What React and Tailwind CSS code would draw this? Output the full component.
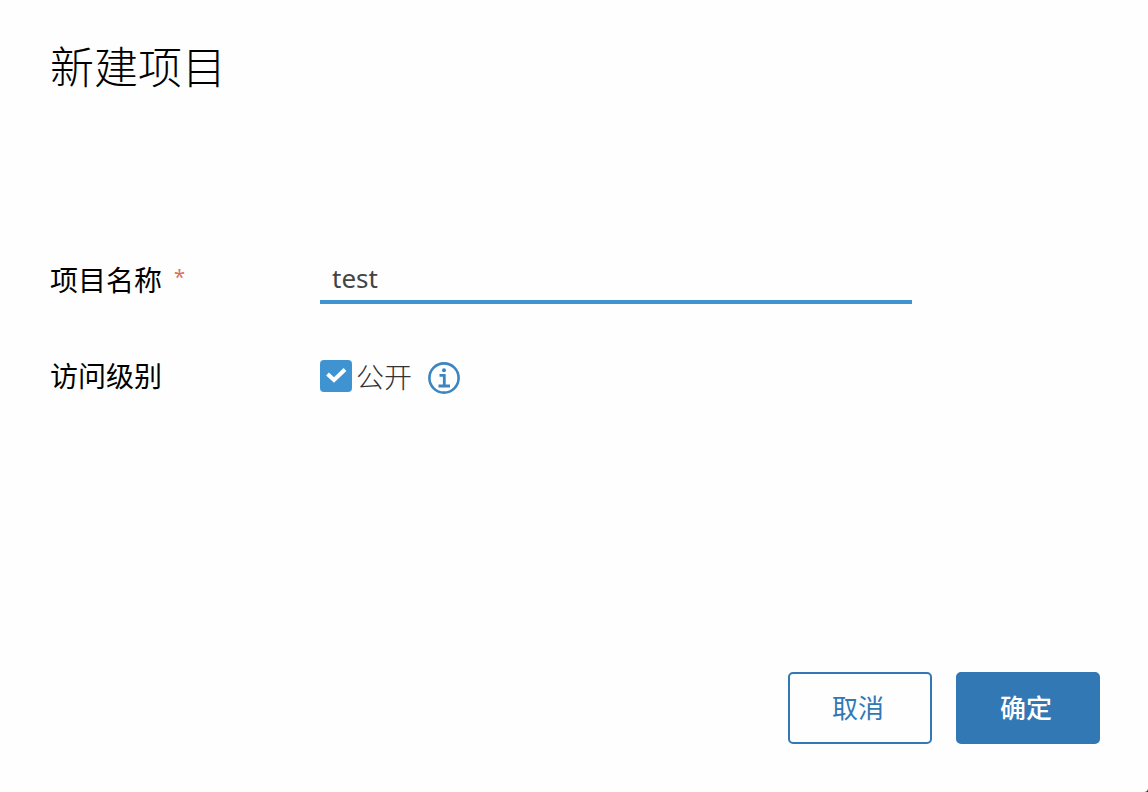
import { useState } from "react";

export default function App() {
  const [name, setName] = useState("test");
  const [isPublic, setIsPublic] = useState(true);

  return (
    <div className="min-h-screen bg-[#313131] font-['Noto_Sans','Noto_Sans_CJK_SC',sans-serif]">
      <form
        className="flex min-h-screen flex-col rounded-br-[4px] bg-[#fefefe] px-12 pt-9 pb-12"
        onSubmit={(e) => e.preventDefault()}
      >
        <h1 className="pl-0.5 text-[44px] leading-[62px] font-light text-black">新建项目</h1>

        <div className="mt-[158px] flex flex-1 flex-col gap-12 pl-0.5">
          <div className="flex items-start">
            <label
              htmlFor="project-name"
              className="flex w-[270px] shrink-0 gap-3 text-[28px] leading-12 text-black"
            >
              项目名称<span className="text-[20px] leading-[42px] text-[#d9705a]">*</span>
            </label>
            <input
              id="project-name"
              type="text"
              value={name}
              onChange={(e) => setName(e.target.value)}
              className="h-12 w-[592px] border-b-4 border-[#3f93d0] bg-transparent px-3 text-[26px] text-[#444444] outline-none"
            />
          </div>

          <div className="flex items-start">
            <span className="w-[270px] shrink-0 text-[28px] leading-12 text-black">访问级别</span>
            <label className="flex items-start gap-1 text-[28px] leading-[50px] font-light text-[#333333]">
              <span className="grid h-12 w-8 items-center">
                <input
                  type="checkbox"
                  checked={isPublic}
                  onChange={(e) => setIsPublic(e.target.checked)}
                  className="peer col-start-1 row-start-1 size-8 appearance-none rounded-[4px] border-2 border-[#3f93d0] checked:bg-[#3f93d0]"
                />
                <svg
                  viewBox="0 0 32 32"
                  className="pointer-events-none invisible col-start-1 row-start-1 size-8 peer-checked:visible"
                  fill="none"
                  stroke="#ffffff"
                  strokeWidth="4"
                  aria-hidden="true"
                >
                  <path d="M7.5 14 L14 20 L25 9.5" />
                </svg>
              </span>
              公开
            </label>
            <button type="button" aria-label="访问级别说明" className="ml-4 flex h-[52px] items-center">
              <svg viewBox="0 0 32 32" className="size-8" fill="none" stroke="#3b86c2" aria-hidden="true">
                <circle cx="16" cy="16" r="14.6" strokeWidth="2.6" />
                <circle cx="16" cy="8.2" r="2" fill="#3b86c2" stroke="none" />
                <path d="M11.5 13.4 H16.3 V24 M10.5 24 H22" strokeWidth="2.8" />
              </svg>
            </button>
          </div>
        </div>

        <div className="flex justify-end gap-6">
          <button
            type="button"
            className="h-[72px] w-36 rounded-[5px] border-2 border-[#3278b5] pr-1 text-[26px] text-[#3278b5]"
          >
            取消
          </button>
          <button
            type="submit"
            className="h-[72px] w-36 rounded-[5px] border-2 border-[#3278b5] bg-[#3278b5] pr-1 text-[26px] font-medium text-white"
          >
            确定
          </button>
        </div>
      </form>
    </div>
  );
}
